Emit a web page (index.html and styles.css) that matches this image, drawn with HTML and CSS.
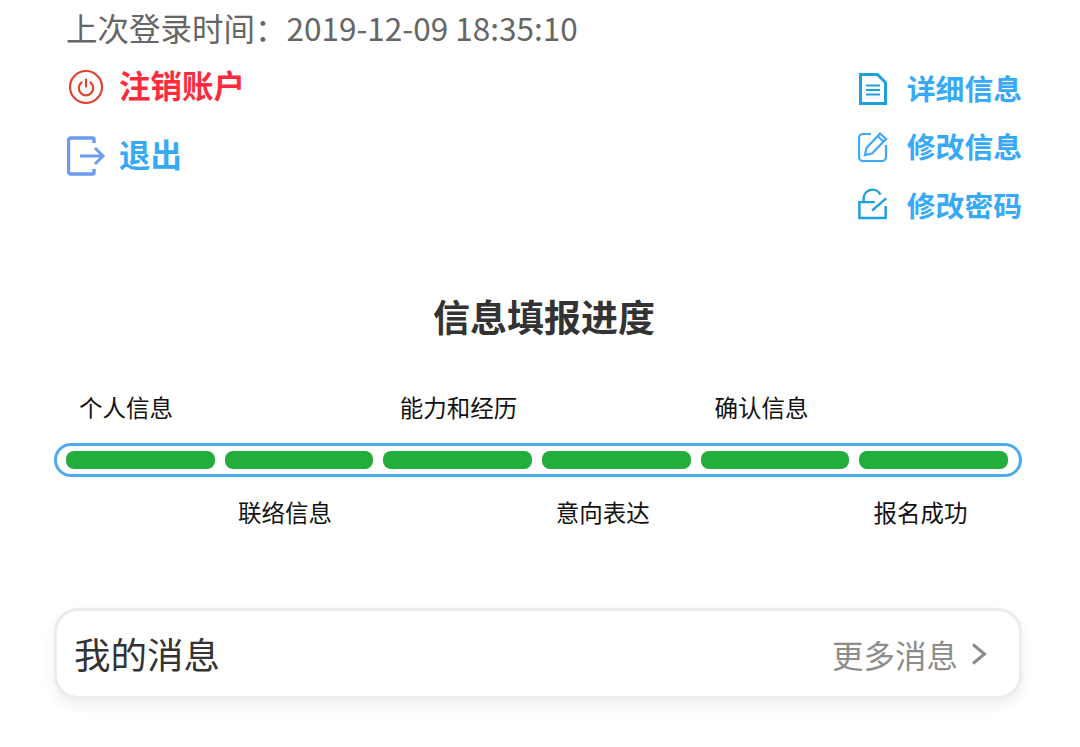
FILE: index.html
```html
<!DOCTYPE html>
<html lang="zh-CN">
<head>
<meta charset="utf-8">
<title>信息填报进度</title>
<link rel="stylesheet" href="styles.css">
</head>
<body>
<main class="page">
  <p class="last-login">上次登录时间：2019-12-09 18:35:10</p>
  <section class="actions">
    <div class="actions-left">
      <a class="action danger">
        <svg class="icon icon-power" viewBox="0 0 36 36" width="36" height="36"><circle cx="18" cy="18" r="16" fill="none" stroke="#e0432f" stroke-width="2.200"/><path d="M13.600 13.400a7.200 7.200 0 1 0 8.800 0M18 10.600v7" fill="none" stroke="#e0432f" stroke-width="2.200" stroke-linecap="round"/></svg>
        <span>注销账户</span>
      </a>
      <a class="action exit">
        <svg class="icon icon-exit" viewBox="0 0 40 40" width="40" height="40"><path d="M27 7V3.500A1.500 1.500 0 0 0 25.500 2H4A2.500 2.500 0 0 0 1.500 4.500v31A2.500 2.500 0 0 0 4 38h21.500a1.500 1.500 0 0 0 1.500-1.500V33" fill="none" stroke="#6d9bef" stroke-width="3.400"/><path d="M13 20h23M28 12l8 8-8 8" fill="none" stroke="#6d9bef" stroke-width="3"/></svg>
        <span>退出</span>
      </a>
    </div>
    <div class="actions-right">
      <a class="action small">
        <svg class="icon icon-doc" viewBox="0 0 30 32" width="30" height="32"><path d="M2.500 1.500h17l8 8V30.500h-25z" fill="none" stroke="#1f9ee0" stroke-width="3"/><path d="M8 12.500h14M8 17h14M8 21.500h14" stroke="#1f9ee0" stroke-width="2.200"/></svg>
        <span>详细信息</span>
      </a>
      <a class="action small">
        <svg class="icon" viewBox="0 0 30 32" width="30" height="32"><path d="M13 4H5a4 4 0 0 0-4 4v19a4 4 0 0 0 4 4h19a4 4 0 0 0 4-4v-12" fill="none" stroke="#3fa9f5" stroke-width="2.200"/><path d="M7 25l1.500-7L22 3.500l6 5.500L14 23.500zM19.500 6l6 5.500" fill="none" stroke="#3fa9f5" stroke-width="2.200"/></svg>
        <span>修改信息</span>
      </a>
      <a class="action small">
        <svg class="icon" viewBox="0 0 32 34" width="30" height="34"><path d="M6 15V11a9.500 9.500 0 0 1 18-4" fill="none" stroke="#1f9ee0" stroke-width="2.600"/><path d="M18 15H1.500v17h28V19" fill="none" stroke="#1f9ee0" stroke-width="2.600"/><path d="M15 24L30 11" fill="none" stroke="#1f9ee0" stroke-width="2.600"/></svg>
        <span>修改密码</span>
      </a>
    </div>
  </section>

  <h1 class="title">信息填报进度</h1>

  <section class="progress">
    <div class="labels">
      <span>个人信息</span><span></span><span class="label-long">能力和经历</span><span></span><span>确认信息</span><span></span>
    </div>
    <div class="bar">
      <i></i><i></i><i></i><i></i><i></i><i></i>
    </div>
    <div class="labels labels-bottom">
      <span></span><span>联络信息</span><span></span><span>意向表达</span><span></span><span>报名成功</span>
    </div>
  </section>

  <section class="messages">
    <h2>我的消息</h2>
    <a class="more">
      <span>更多消息</span>
      <svg viewBox="0 0 16 24" width="16" height="24"><path d="M2 2.500L13.500 12 2 21.500" fill="none" stroke="#8c8c8c" stroke-width="3"/></svg>
    </a>
  </section>
</main>
</body>
</html>
```
FILE: styles.css
```css
* { box-sizing: border-box; }
html, body { margin: 0; padding: 0; background: #fff; }
body {
  width: 1080px;
  height: 747px;
  overflow: hidden;
  font-family: "Noto Sans CJK SC", "Noto Sans", sans-serif;
}
.page { padding: 0 58px 0 54px; }
.last-login {
  margin: 0;
  padding: 5px 0 0 12px;
  height: 52px;
  font-size: 31.500px;
  line-height: 44px;
  color: #666;
  white-space: nowrap;
}
.actions {
  display: flex;
  justify-content: space-between;
  height: 209px;
}
.actions-left { display: flex; flex-direction: column; padding: 9px 0 0 13px; gap: 23px; }
.actions-right { display: flex; flex-direction: column; padding-top: 13px; gap: 14.500px; align-items: flex-start; }
.action {
  display: flex;
  align-items: center;
  gap: 16px;
  height: 46px;
  font-size: 31.500px;
  font-weight: 700;
  color: #36a9f9;
  white-space: nowrap;
}
.danger { color: #ff2a3c; }
.exit { gap: 12px; }
.icon-power { margin: 6px -1px 0 1px; }
.icon-exit { margin-top: 6px; }
.icon-doc { margin-top: 3px; }
.small { font-size: 28.800px; gap: 19px; height: 44px; }
.title {
  margin: 0;
  height: 122px;
  padding: 28px 0 0 12px;
  font-size: 37px;
  line-height: 54px;
  font-weight: 700;
  color: #333;
  text-align: center;
}
.labels {
  display: grid;
  grid-template-columns: repeat(6, 158.900px);
  padding-left: 25px;
  height: 60px;
  padding-top: 7px;
  font-size: 23.500px;
  line-height: 34px;
  color: #111;
  white-space: nowrap;
}
.label-long { padding-left: 3px; }
.labels-bottom { height: 131px; padding-top: 18px; }
.bar {
  display: grid;
  grid-template-columns: repeat(6, 1fr);
  gap: 10px;
  height: 34px;
  padding: 5px 11px 5px 9px;
  border: 3px solid #4dabef;
  border-radius: 17px;
}
.bar i {
  display: block;
  height: 18px;
  border-radius: 8px;
  background: #22ad3c;
}
.messages {
  display: flex;
  align-items: center;
  justify-content: space-between;
  height: 91px;
  padding: 0 32px 0 17px;
  border: 3px solid #ececec;
  border-radius: 24px;
  background: #fff;
  box-shadow: 0 6px 14px rgba(0, 0, 0, .07);
}
.messages h2 {
  margin: 0;
  font-size: 36.500px;
  font-weight: 400;
  color: #333;
}
.more {
  display: flex;
  align-items: center;
  gap: 13px;
  font-size: 31.500px;
  color: #8c8c8c;
}
```
